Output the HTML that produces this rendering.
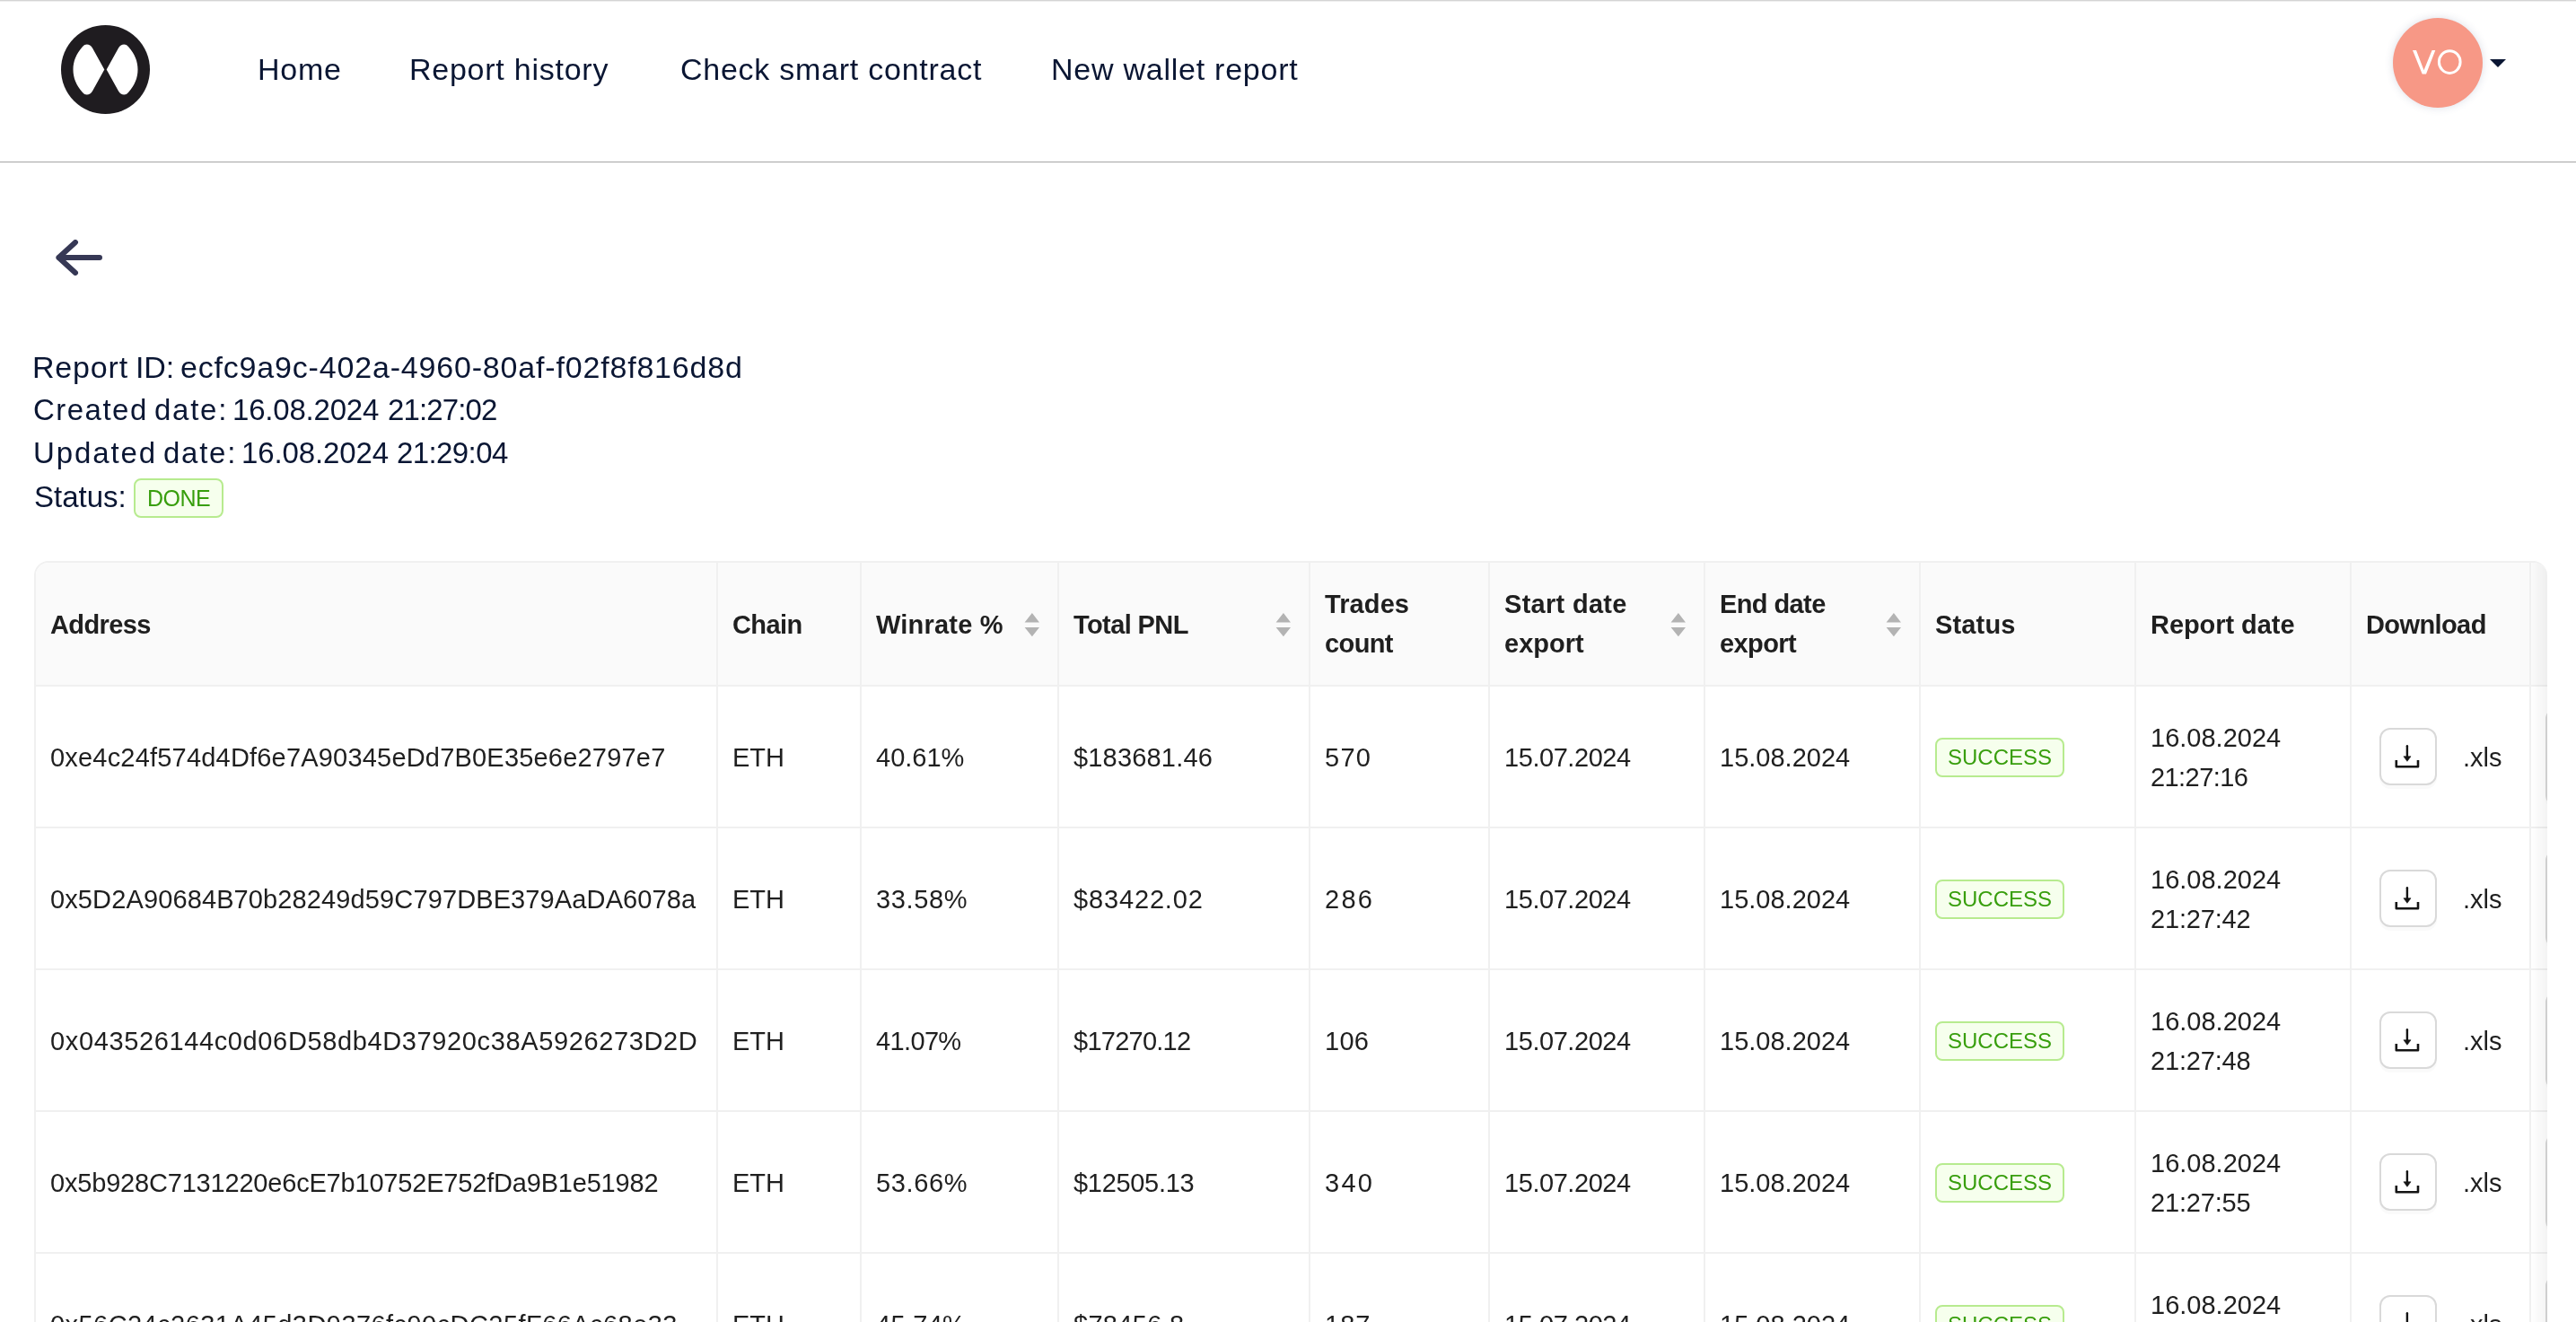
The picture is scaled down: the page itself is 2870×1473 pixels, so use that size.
<!DOCTYPE html><html><head><meta charset="utf-8"><style>
*{margin:0;padding:0;box-sizing:border-box}
html,body{width:2870px;height:1473px;overflow:hidden;background:#fff}
body *{will-change:transform}
body{position:relative;font-family:"Liberation Sans",sans-serif;color:#0a1633}
.abs{position:absolute}
.topline{position:absolute;left:0;top:0;width:2870px;height:1px;background:#d4d4d4}
.topline2{position:absolute;left:0;top:1px;width:2870px;height:1px;background:#efefef}
.hdrline{position:absolute;left:0;top:180px;width:2870px;height:1px;background:#a4a4a4}
.nav{position:absolute;top:51.5px;letter-spacing:0.75px;height:50px;line-height:50px;font-size:34px;color:#0a1633;white-space:nowrap}
.info{position:absolute;left:38px;font-size:33px;color:#0a1633;white-space:nowrap;height:40px;line-height:40px}
.tag{position:absolute;border:2px solid #b7eb8f;background:#f6ffed;color:#389e0d;border-radius:8px;font-size:23px;text-align:center;white-space:nowrap}
.tbl{position:absolute;left:38px;top:625px;width:2800px;height:900px;overflow:hidden;border-radius:16px 16px 0 0;border-top:2px solid #f0f0f0;border-left:2px solid #f0f0f0}
.tblin{position:absolute;left:0;top:0;width:2820px;height:1000px}
.th{position:absolute;background:#fafafa;border-right:2px solid #f0f0f0;border-bottom:2px solid #f0f0f0;font-weight:bold;font-size:29px;letter-spacing:-0.6px;color:#1f1f1f;line-height:44px;display:flex;align-items:center;padding-left:16px;padding-top:1px}
.td{position:absolute;background:#fff;border-right:2px solid #f0f0f0;border-bottom:2px solid #f0f0f0;font-size:29px;color:#1f1f1f;line-height:44px;display:flex;align-items:center;padding-left:16px;padding-top:1px;white-space:nowrap}
.sorter{position:absolute;width:17px;height:26px}
.dlbtn{position:absolute;width:64px;height:64px;border:2px solid #d9d9d9;border-radius:12px;background:#fff;box-shadow:0 4px 0 rgba(0,0,0,0.02)}
</style></head><body>
<div class="topline"></div><div class="topline2"></div><div class="hdrline"></div>
<svg class="abs" style="left:68px;top:28px" width="99" height="99" viewBox="0 0 99 99">
<circle cx="49.5" cy="49.5" r="49.5" fill="#1f1c20"/>
<path d="M48.3 49.5 L35 25.5 C32.5 21 27 20 24 24 C17 32 13.5 40 13.5 49.5 C13.5 59 17 67 24 75 C27 79 32.5 78 35 73.5 Z" fill="#fff"/>
<path d="M50.7 49.5 L64 25.5 C66.5 21 72 20 75 24 C82 32 85.5 40 85.5 49.5 C85.5 59 82 67 75 75 C72 79 66.5 78 64 73.5 Z" fill="#fff"/>
</svg>
<div class="nav" style="left:286.5px">Home</div>
<div class="nav" style="left:456px">Report history</div>
<div class="nav" style="left:758px">Check smart contract</div>
<div class="nav" style="left:1171px">New wallet report</div>
<div class="abs" style="left:2666px;top:20px;width:100px;height:100px;border-radius:50%;background:#f79886;box-shadow:0 0 10px rgba(60,80,120,0.18)"></div>
<svg class="abs" style="left:2680px;top:50px" width="70" height="40" viewBox="0 0 70 40"><path d="M8 6 H12 L20.5 28.2 L29.6 6 H33.3 L23 32.4 H18.7 Z" fill="#fff"/><ellipse cx="49.25" cy="19.05" rx="11.85" ry="12.4" fill="none" stroke="#fff" stroke-width="3"/></svg>
<svg class="abs" style="left:2774px;top:66px" width="18" height="9" viewBox="0 0 18 9"><path d="M0 0 H18 L9 9 Z" fill="#0a1633"/></svg>
<svg class="abs" style="left:50px;top:250px" width="80" height="80" viewBox="0 0 80 80">
<path d="M34 20 L15.4 37 L34 54 M15.4 37 H61" fill="none" stroke="#363855" stroke-width="6" stroke-linecap="round" stroke-linejoin="round"/></svg>
<div class="info" style="top:389px;left:35.60px;font-size:34px;letter-spacing:0.820px">Report</div>
<div class="info" style="top:389px;left:150.80px;font-size:34px;letter-spacing:-0.150px">ID:</div>
<div class="info" style="top:389px;left:201.40px;font-size:34px;letter-spacing:0.817px">ecfc9a9c-402a-4960-80af-f02f8f816d8d</div>
<div class="info" style="top:437px;left:36.60px;font-size:33px;letter-spacing:1.483px">Created</div>
<div class="info" style="top:437px;left:172.20px;font-size:33px;letter-spacing:1.750px">date:</div>
<div class="info" style="top:437px;left:259.20px;font-size:33px;letter-spacing:-0.211px">16.08.2024</div>
<div class="info" style="top:437px;left:432.00px;font-size:33px;letter-spacing:-0.857px">21:27:02</div>
<div class="info" style="top:484.5px;left:36.60px;font-size:33px;letter-spacing:1.883px">Updated</div>
<div class="info" style="top:484.5px;left:182.00px;font-size:33px;letter-spacing:1.750px">date:</div>
<div class="info" style="top:484.5px;left:269.00px;font-size:33px;letter-spacing:-0.111px">16.08.2024</div>
<div class="info" style="top:484.5px;left:442.00px;font-size:33px;letter-spacing:-0.600px">21:29:04</div>
<div class="info" style="top:533.5px;font-size:33px">Status:</div>
<div class="tag" style="left:149px;top:533px;width:100px;height:44px;line-height:41px;font-size:25px;letter-spacing:-0.5px">DONE</div>
<div class="tbl"><div class="tblin">
<div class="th" style="left:0px;top:0px;width:760px;height:138px;"><div>Address</div></div>
<div class="th" style="left:760px;top:0px;width:160px;height:138px;"><div>Chain</div></div>
<div class="th" style="left:920px;top:0px;width:220px;height:138px;"><div><span style="letter-spacing:0.2px">Winrate %</span></div></div>
<svg class="sorter" style="left:1101px;top:56px" viewBox="0 0 17 26"><path d="M8.9 0 L17 10.4 H0.6 Z M0.6 16 H17 L8.9 26.2 Z" fill="#b3b3b3"/></svg>
<div class="th" style="left:1140px;top:0px;width:280px;height:138px;"><div>Total PNL</div></div>
<svg class="sorter" style="left:1381px;top:56px" viewBox="0 0 17 26"><path d="M8.9 0 L17 10.4 H0.6 Z M0.6 16 H17 L8.9 26.2 Z" fill="#b3b3b3"/></svg>
<div class="th" style="left:1420px;top:0px;width:200px;height:138px;padding-top:0px"><div><span style="letter-spacing:0.1px">Trades</span><br><span style="letter-spacing:-0.6px">count</span></div></div>
<div class="th" style="left:1620px;top:0px;width:240px;height:138px;padding-top:0px"><div><span style="letter-spacing:0.3px">Start date</span><br><span style="letter-spacing:0px">export</span></div></div>
<svg class="sorter" style="left:1821px;top:56px" viewBox="0 0 17 26"><path d="M8.9 0 L17 10.4 H0.6 Z M0.6 16 H17 L8.9 26.2 Z" fill="#b3b3b3"/></svg>
<div class="th" style="left:1860px;top:0px;width:240px;height:138px;padding-top:0px"><div>End date<br>export</div></div>
<svg class="sorter" style="left:2061px;top:56px" viewBox="0 0 17 26"><path d="M8.9 0 L17 10.4 H0.6 Z M0.6 16 H17 L8.9 26.2 Z" fill="#b3b3b3"/></svg>
<div class="th" style="left:2100px;top:0px;width:240px;height:138px;"><div><span style="letter-spacing:0.16px">Status</span></div></div>
<div class="th" style="left:2340px;top:0px;width:240px;height:138px;"><div><span style="letter-spacing:-0.06px">Report date</span></div></div>
<div class="th" style="left:2580px;top:0px;width:200px;height:138px;"><div>Download</div></div>
<div class="th" style="left:2780px;top:0px;width:200px;height:138px;"><div></div></div>
<div class="td" style="left:0px;top:138px;width:760px;height:158px"><div><span style="letter-spacing:0.195px">0xe4c24f574d4Df6e7A90345eDd7B0E35e6e2797e7</span></div></div>
<div class="td" style="left:760px;top:138px;width:160px;height:158px"><div>ETH</div></div>
<div class="td" style="left:920px;top:138px;width:220px;height:158px"><div><span style="letter-spacing:0px">40.61%</span></div></div>
<div class="td" style="left:1140px;top:138px;width:280px;height:158px"><div><span style="letter-spacing:0.18px">$183681.46</span></div></div>
<div class="td" style="left:1420px;top:138px;width:200px;height:158px"><div><span style="letter-spacing:1.3px">570</span></div></div>
<div class="td" style="left:1620px;top:138px;width:240px;height:158px"><div><span style="letter-spacing:-0.44px">15.07.2024</span></div></div>
<div class="td" style="left:1860px;top:138px;width:240px;height:158px"><div>15.08.2024</div></div>
<div class="td" style="left:2100px;top:138px;width:240px;height:158px"><div></div></div>
<div class="td" style="left:2340px;top:138px;width:240px;height:158px"><div>16.08.2024<br><span style="letter-spacing:-0.57px">21:27:16</span></div></div>
<div class="td" style="left:2580px;top:138px;width:200px;height:158px"><div></div></div>
<div class="td" style="left:2780px;top:138px;width:200px;height:158px"><div></div></div>
<div class="tag" style="left:2116px;top:195px;width:144px;height:44px;line-height:39px;font-size:24px">SUCCESS</div>
<div class="dlbtn" style="left:2611px;top:184px"></div>
<svg class="abs" style="left:2611px;top:184px" width="64" height="64" viewBox="0 0 64 64"><path d="M30.9 20.2 V33" stroke="#141414" stroke-width="2.4" stroke-linecap="round"/><path d="M26.9 31.8 H35 L30.95 37.3 Z" fill="#141414" stroke="#141414" stroke-width="0.6" stroke-linejoin="round"/><path d="M18.8 36 V43.2 H43 V36" fill="none" stroke="#141414" stroke-width="2.6" stroke-linejoin="round"/></svg>
<div class="abs" style="left:2704px;top:138px;height:158px;line-height:158px;font-size:29px;color:#1f1f1f">.xls</div>
<div class="dlbtn" style="left:2796px;top:162px;height:109px;width:60px"></div>
<div class="td" style="left:0px;top:296px;width:760px;height:158px"><div><span style="letter-spacing:0.12px">0x5D2A90684B70b28249d59C797DBE379AaDA6078a</span></div></div>
<div class="td" style="left:760px;top:296px;width:160px;height:158px"><div>ETH</div></div>
<div class="td" style="left:920px;top:296px;width:220px;height:158px"><div><span style="letter-spacing:0.66px">33.58%</span></div></div>
<div class="td" style="left:1140px;top:296px;width:280px;height:158px"><div><span style="letter-spacing:0.85px">$83422.02</span></div></div>
<div class="td" style="left:1420px;top:296px;width:200px;height:158px"><div><span style="letter-spacing:2.25px">286</span></div></div>
<div class="td" style="left:1620px;top:296px;width:240px;height:158px"><div><span style="letter-spacing:-0.44px">15.07.2024</span></div></div>
<div class="td" style="left:1860px;top:296px;width:240px;height:158px"><div>15.08.2024</div></div>
<div class="td" style="left:2100px;top:296px;width:240px;height:158px"><div></div></div>
<div class="td" style="left:2340px;top:296px;width:240px;height:158px"><div>16.08.2024<br><span style="letter-spacing:-0.17px">21:27:42</span></div></div>
<div class="td" style="left:2580px;top:296px;width:200px;height:158px"><div></div></div>
<div class="td" style="left:2780px;top:296px;width:200px;height:158px"><div></div></div>
<div class="tag" style="left:2116px;top:353px;width:144px;height:44px;line-height:39px;font-size:24px">SUCCESS</div>
<div class="dlbtn" style="left:2611px;top:342px"></div>
<svg class="abs" style="left:2611px;top:342px" width="64" height="64" viewBox="0 0 64 64"><path d="M30.9 20.2 V33" stroke="#141414" stroke-width="2.4" stroke-linecap="round"/><path d="M26.9 31.8 H35 L30.95 37.3 Z" fill="#141414" stroke="#141414" stroke-width="0.6" stroke-linejoin="round"/><path d="M18.8 36 V43.2 H43 V36" fill="none" stroke="#141414" stroke-width="2.6" stroke-linejoin="round"/></svg>
<div class="abs" style="left:2704px;top:296px;height:158px;line-height:158px;font-size:29px;color:#1f1f1f">.xls</div>
<div class="dlbtn" style="left:2796px;top:320px;height:109px;width:60px"></div>
<div class="td" style="left:0px;top:454px;width:760px;height:158px"><div><span style="letter-spacing:0.63px">0x043526144c0d06D58db4D37920c38A5926273D2D</span></div></div>
<div class="td" style="left:760px;top:454px;width:160px;height:158px"><div>ETH</div></div>
<div class="td" style="left:920px;top:454px;width:220px;height:158px"><div><span style="letter-spacing:-0.64px">41.07%</span></div></div>
<div class="td" style="left:1140px;top:454px;width:280px;height:158px"><div><span style="letter-spacing:-0.75px">$17270.12</span></div></div>
<div class="td" style="left:1420px;top:454px;width:200px;height:158px"><div><span style="letter-spacing:0.25px">106</span></div></div>
<div class="td" style="left:1620px;top:454px;width:240px;height:158px"><div><span style="letter-spacing:-0.44px">15.07.2024</span></div></div>
<div class="td" style="left:1860px;top:454px;width:240px;height:158px"><div>15.08.2024</div></div>
<div class="td" style="left:2100px;top:454px;width:240px;height:158px"><div></div></div>
<div class="td" style="left:2340px;top:454px;width:240px;height:158px"><div>16.08.2024<br><span style="letter-spacing:-0.17px">21:27:48</span></div></div>
<div class="td" style="left:2580px;top:454px;width:200px;height:158px"><div></div></div>
<div class="td" style="left:2780px;top:454px;width:200px;height:158px"><div></div></div>
<div class="tag" style="left:2116px;top:511px;width:144px;height:44px;line-height:39px;font-size:24px">SUCCESS</div>
<div class="dlbtn" style="left:2611px;top:500px"></div>
<svg class="abs" style="left:2611px;top:500px" width="64" height="64" viewBox="0 0 64 64"><path d="M30.9 20.2 V33" stroke="#141414" stroke-width="2.4" stroke-linecap="round"/><path d="M26.9 31.8 H35 L30.95 37.3 Z" fill="#141414" stroke="#141414" stroke-width="0.6" stroke-linejoin="round"/><path d="M18.8 36 V43.2 H43 V36" fill="none" stroke="#141414" stroke-width="2.6" stroke-linejoin="round"/></svg>
<div class="abs" style="left:2704px;top:454px;height:158px;line-height:158px;font-size:29px;color:#1f1f1f">.xls</div>
<div class="dlbtn" style="left:2796px;top:478px;height:109px;width:60px"></div>
<div class="td" style="left:0px;top:612px;width:760px;height:158px"><div><span style="letter-spacing:-0.19px">0x5b928C7131220e6cE7b10752E752fDa9B1e51982</span></div></div>
<div class="td" style="left:760px;top:612px;width:160px;height:158px"><div>ETH</div></div>
<div class="td" style="left:920px;top:612px;width:220px;height:158px"><div><span style="letter-spacing:0.66px">53.66%</span></div></div>
<div class="td" style="left:1140px;top:612px;width:280px;height:158px"><div><span style="letter-spacing:-0.31px">$12505.13</span></div></div>
<div class="td" style="left:1420px;top:612px;width:200px;height:158px"><div><span style="letter-spacing:2.25px">340</span></div></div>
<div class="td" style="left:1620px;top:612px;width:240px;height:158px"><div><span style="letter-spacing:-0.44px">15.07.2024</span></div></div>
<div class="td" style="left:1860px;top:612px;width:240px;height:158px"><div>15.08.2024</div></div>
<div class="td" style="left:2100px;top:612px;width:240px;height:158px"><div></div></div>
<div class="td" style="left:2340px;top:612px;width:240px;height:158px"><div>16.08.2024<br><span style="letter-spacing:-0.17px">21:27:55</span></div></div>
<div class="td" style="left:2580px;top:612px;width:200px;height:158px"><div></div></div>
<div class="td" style="left:2780px;top:612px;width:200px;height:158px"><div></div></div>
<div class="tag" style="left:2116px;top:669px;width:144px;height:44px;line-height:39px;font-size:24px">SUCCESS</div>
<div class="dlbtn" style="left:2611px;top:658px"></div>
<svg class="abs" style="left:2611px;top:658px" width="64" height="64" viewBox="0 0 64 64"><path d="M30.9 20.2 V33" stroke="#141414" stroke-width="2.4" stroke-linecap="round"/><path d="M26.9 31.8 H35 L30.95 37.3 Z" fill="#141414" stroke="#141414" stroke-width="0.6" stroke-linejoin="round"/><path d="M18.8 36 V43.2 H43 V36" fill="none" stroke="#141414" stroke-width="2.6" stroke-linejoin="round"/></svg>
<div class="abs" style="left:2704px;top:612px;height:158px;line-height:158px;font-size:29px;color:#1f1f1f">.xls</div>
<div class="dlbtn" style="left:2796px;top:636px;height:109px;width:60px"></div>
<div class="td" style="left:0px;top:770px;width:760px;height:158px"><div><span style="letter-spacing:0.44px">0x56C24c2631A45d3D9376fc90cDC25fF66Ac68e33</span></div></div>
<div class="td" style="left:760px;top:770px;width:160px;height:158px"><div>ETH</div></div>
<div class="td" style="left:920px;top:770px;width:220px;height:158px"><div><span style="letter-spacing:0.3px">45.74%</span></div></div>
<div class="td" style="left:1140px;top:770px;width:280px;height:158px"><div><span style="letter-spacing:0.3px">$78456.8</span></div></div>
<div class="td" style="left:1420px;top:770px;width:200px;height:158px"><div><span style="letter-spacing:1.0px">187</span></div></div>
<div class="td" style="left:1620px;top:770px;width:240px;height:158px"><div><span style="letter-spacing:-0.44px">15.07.2024</span></div></div>
<div class="td" style="left:1860px;top:770px;width:240px;height:158px"><div>15.08.2024</div></div>
<div class="td" style="left:2100px;top:770px;width:240px;height:158px"><div></div></div>
<div class="td" style="left:2340px;top:770px;width:240px;height:158px"><div>16.08.2024<br><span style="letter-spacing:-0.17px">21:28:01</span></div></div>
<div class="td" style="left:2580px;top:770px;width:200px;height:158px"><div></div></div>
<div class="td" style="left:2780px;top:770px;width:200px;height:158px"><div></div></div>
<div class="tag" style="left:2116px;top:827px;width:144px;height:44px;line-height:39px;font-size:24px">SUCCESS</div>
<div class="dlbtn" style="left:2611px;top:816px"></div>
<svg class="abs" style="left:2611px;top:816px" width="64" height="64" viewBox="0 0 64 64"><path d="M30.9 20.2 V33" stroke="#141414" stroke-width="2.4" stroke-linecap="round"/><path d="M26.9 31.8 H35 L30.95 37.3 Z" fill="#141414" stroke="#141414" stroke-width="0.6" stroke-linejoin="round"/><path d="M18.8 36 V43.2 H43 V36" fill="none" stroke="#141414" stroke-width="2.6" stroke-linejoin="round"/></svg>
<div class="abs" style="left:2704px;top:770px;height:158px;line-height:158px;font-size:29px;color:#1f1f1f">.xls</div>
<div class="dlbtn" style="left:2796px;top:794px;height:109px;width:60px"></div>
</div>
<div class="abs" style="left:2780px;top:0;width:20px;height:848px;background:linear-gradient(to right,rgba(0,0,0,0),rgba(0,0,0,0.05))"></div>
</div>
</body></html>
